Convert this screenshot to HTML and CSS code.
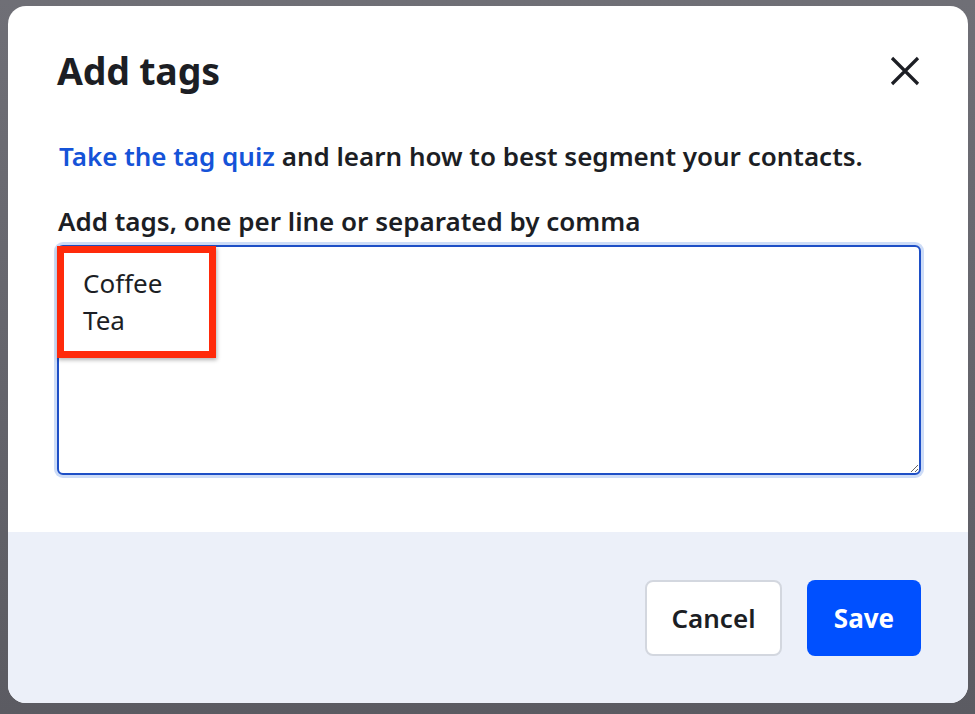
FILE: index.html
```html
<!DOCTYPE html>
<html lang="en">
<head>
<meta charset="utf-8">
<title>Add tags</title>
<link rel="stylesheet" href="styles.css">
</head>
<body>
<div class="backdrop">
  <div class="modal">
    <div class="modal-body">
      <div class="modal-header">
        <h1 class="title">Add tags</h1>
        <button class="close" aria-label="Close">
          <svg width="32" height="32" viewBox="0 0 32 32"><path d="M3 3 L29 29 M29 3 L3 29" stroke="#1c1e24" stroke-width="3.2" fill="none"/></svg>
        </button>
      </div>
      <p class="intro"><a class="link" href="#">Take the tag quiz</a> and learn how to best segment your contacts.</p>
      <label class="label" for="tags">Add tags, one per line or separated by comma</label>
      <div class="field">
        <textarea id="tags" class="textarea">Coffee
Tea</textarea>
        <div class="highlight"></div>
      </div>
    </div>
    <div class="modal-footer">
      <button class="btn btn-cancel">Cancel</button>
      <button class="btn btn-save">Save</button>
    </div>
  </div>
</div>
</body>
</html>
```
FILE: styles.css
```css
* { box-sizing: border-box; }
html, body { margin: 0; padding: 0; }
body {
  font-family: "Noto Sans", "Inter", sans-serif;
  color: #1c1e24;
  background: #66666d;
}
.backdrop {
  width: 975px;
  height: 714px;
  padding: 6px 7px 11px 8px;
  background: linear-gradient(#6f6f76, #5b5b62);
}
.modal {
  width: 960px;
  height: 697px;
  background: #fff;
  border-radius: 18px;
  overflow: hidden;
  display: flex;
  flex-direction: column;
}
.modal-body {
  flex: 1;
  padding: 40px 47px 0 49px;
}
.modal-header {
  display: flex;
  justify-content: space-between;
  align-items: center;
}
.title {
  margin: 0;
  font-size: 37.5px;
  font-weight: 700;
  line-height: 50px;
  letter-spacing: -0.2px;
}
.close {
  border: 0;
  background: none;
  padding: 0;
  width: 32px;
  height: 32px;
  display: flex;
}
.intro {
  margin: 44px 0 0 2px;
  font-size: 26px;
  font-weight: 600;
  line-height: 32px;
}
.link { color: #1553d8; text-decoration: none; }
.label {
  display: block;
  margin-top: 33px;
  font-size: 26px;
  font-weight: 600;
  line-height: 32px;
  margin-left: 1px;
}
.field {
  position: relative;
  margin-top: 8px;
}
.textarea {
  display: block;
  width: 100%;
  height: 230px;
  border: 2px solid #1e4fc6;
  border-radius: 6px;
  box-shadow: 0 0 0 3px #cddcf7;
  padding: 18px 24px 16px;
  font-family: inherit;
  font-size: 26px;
  line-height: 37px;
  color: #1c1e24;
  resize: vertical;
  outline: none;
}
.highlight {
  position: absolute;
  left: 0;
  top: 1px;
  width: 159px;
  height: 112px;
  border: 7px solid #ff2a0a;
  box-shadow: 1px 2px 4px rgba(0,0,0,0.3);
  pointer-events: none;
}
.modal-footer {
  height: 171px;
  background: #ecf0f9;
  display: flex;
  justify-content: flex-end;
  align-items: flex-start;
  gap: 25px;
  padding: 48px 47px 0 0;
}
.btn {
  height: 76px;
  border-radius: 8px;
  font-family: inherit;
  font-size: 26px;
  font-weight: 600;
  cursor: pointer;
}
.btn-cancel {
  width: 137px;
  background: #fff;
  border: 2px solid #d3d7df;
  color: #1c1e24;
}
.btn-save {
  width: 114px;
  background: #0050ff;
  border: 0;
  color: #fff;
  font-weight: 700;
}
```
